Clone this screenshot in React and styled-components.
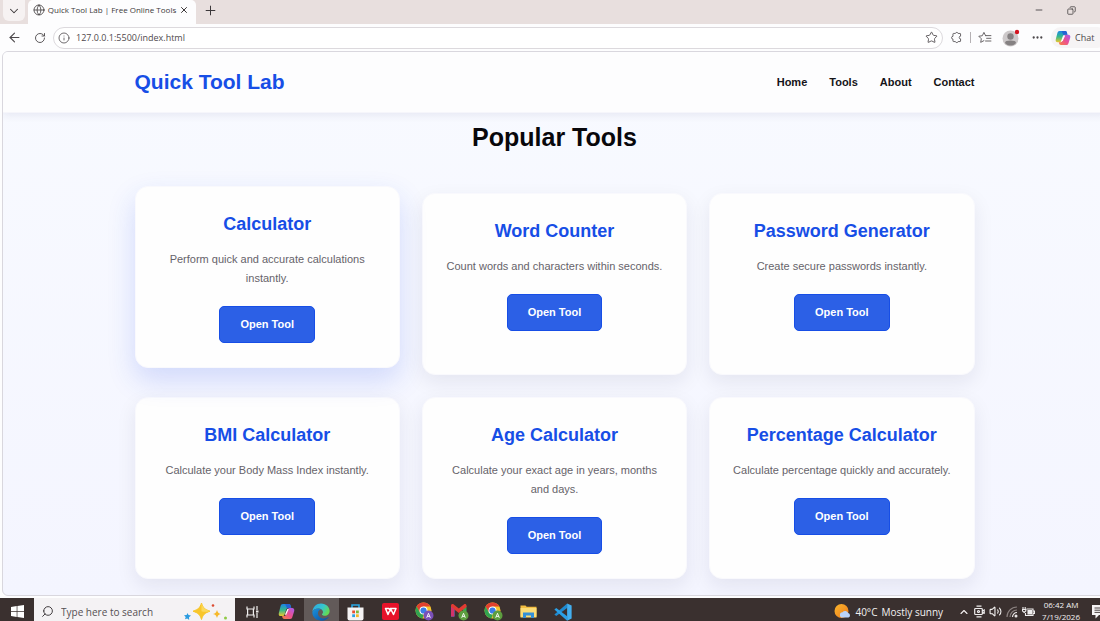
import React from 'react';
import styled, { createGlobalStyle, css } from 'styled-components';
import {
    ArrowLeft,
    ChevronDown,
    ChevronUp,
    Copy,
    Ellipsis,
    Globe,
    Info,
    Minus,
    Plus,
    RotateCw,
    Search,
    Star,
    Volume2,
    X,
} from 'lucide-react';

const NAV = ['Home', 'Tools', 'About', 'Contact'];

const TOOLS = [
    { title: 'Calculator', text: 'Perform quick and accurate calculations instantly.', raised: true },
    { title: 'Word Counter', text: 'Count words and characters within seconds.' },
    { title: 'Password Generator', text: 'Create secure passwords instantly.' },
    { title: 'BMI Calculator', text: 'Calculate your Body Mass Index instantly.' },
    { title: 'Age Calculator', text: 'Calculate your exact age in years, months and days.' },
    { title: 'Percentage Calculator', text: 'Calculate percentage quickly and accurately.' },
];

const APPS = [
    { name: 'Task view', icon: <TaskViewIcon /> },
    { name: 'Copilot', icon: <CopilotIcon size={17} id="task" /> },
    { name: 'Edge', icon: <EdgeIcon />, active: true },
    { name: 'Store', icon: <StoreIcon /> },
    { name: 'WPS Office', icon: <WpsIcon /> },
    { name: 'Chrome profile 1', icon: <ChromeIcon badge="#7a50b8" /> },
    { name: 'Gmail', icon: <GmailIcon /> },
    { name: 'Chrome profile 2', icon: <ChromeIcon badge="#5d9e3f" /> },
    { name: 'File Explorer', icon: <FolderIcon /> },
    { name: 'Visual Studio Code', icon: <CodeIcon /> },
];

function App() {
    return (
        <Screen>
            <GlobalStyle />
            <TabStrip>
                <TabSearch aria-label="Search tabs"><ChevronDown size={14} strokeWidth={1.8} /></TabSearch>
                <Tab>
                    <Globe size={12} strokeWidth={1.6} />
                    <TabTitle>Quick Tool Lab | Free Online Tools</TabTitle>
                    <IconButton aria-label="Close tab"><X size={10} strokeWidth={2.4} /></IconButton>
                </Tab>
                <NewTab aria-label="New tab"><Plus size={15} strokeWidth={1.6} /></NewTab>
                <WindowButtons>
                    <WindowButton aria-label="Minimize"><Minus size={10} strokeWidth={2} /></WindowButton>
                    <WindowButton aria-label="Restore"><Copy size={9} strokeWidth={2} transform="scale(-1 1)" /></WindowButton>
                </WindowButtons>
            </TabStrip>
            <Toolbar>
                <IconButton $width={26} aria-label="Back"><ArrowLeft size={15} strokeWidth={1.8} /></IconButton>
                <IconButton $width={25} aria-label="Reload"><RotateCw size={12} strokeWidth={1.8} /></IconButton>
                <AddressBar>
                    <Info size={12} strokeWidth={1.6} />
                    <AddressInput aria-label="Address" defaultValue="127.0.0.1:5500/index.html" />
                    <IconButton aria-label="Add to favorites"><Star size={13} strokeWidth={1.6} /></IconButton>
                </AddressBar>
                <IconButton $width={27} aria-label="Extensions"><PuzzleIcon /></IconButton>
                <Divider />
                <IconButton $width={28} aria-label="Favorites"><FavoritesIcon /></IconButton>
                <IconButton $width={24} aria-label="Profile"><AvatarIcon /></IconButton>
                <IconButton $width={28} aria-label="Settings"><Ellipsis size={13} strokeWidth={2.2} /></IconButton>
                <ChatButton>
                    <CopilotIcon size={16} id="chat" />
                    Chat
                </ChatButton>
            </Toolbar>
            <Page>
                <Header>
                    <HeaderInner>
                        <Logo>Quick Tool Lab</Logo>
                        <Nav>
                            {NAV.map((item) => (
                                <NavLink key={item} href={`#${item.toLowerCase()}`}>{item}</NavLink>
                            ))}
                        </Nav>
                    </HeaderInner>
                </Header>
                <Content>
                    <Heading>Popular Tools</Heading>
                    <Grid>
                        {TOOLS.map((tool) => (
                            <Card key={tool.title} $raised={tool.raised}>
                                <CardTitle>{tool.title}</CardTitle>
                                <CardText>{tool.text}</CardText>
                                <OpenButton>Open Tool</OpenButton>
                            </Card>
                        ))}
                    </Grid>
                </Content>
            </Page>
            <Taskbar>
                <StartButton aria-label="Start"><WindowsIcon /></StartButton>
                <SearchBox>
                    <Search size={13} strokeWidth={1.8} transform="scale(-1 1)" />
                    <SearchInput aria-label="Search" placeholder="Type here to search" />
                    <SparklesIcon />
                </SearchBox>
                <Apps>
                    {APPS.map((app) => (
                        <AppButton key={app.name} aria-label={app.name} $active={app.active}>{app.icon}</AppButton>
                    ))}
                </Apps>
                <Tray>
                    <Weather>
                        <WeatherIcon />
                        <span>40°C</span>
                        <span>Mostly sunny</span>
                    </Weather>
                    <TrayIcons>
                        <ChevronUp size={12} strokeWidth={2.2} />
                        <MeetIcon />
                        <Volume2 size={13} strokeWidth={2} />
                        <WifiIcon />
                        <BatteryIcon />
                    </TrayIcons>
                    <Clock>
                        <span>06:42 AM</span>
                        <span>7/19/2026</span>
                    </Clock>
                    <NoticeIcon />
                </Tray>
            </Taskbar>
        </Screen>
    );
}

export default App;

function PuzzleIcon() {
    return (
        <svg width="13" height="13" viewBox="0 0 24 24" fill="none" stroke="#5c585b" strokeWidth="1.7" strokeLinejoin="round">
            <path d="M7.500 4.500H10a2.600 2.600 0 0 1 5 0h3.500a1 1 0 0 1 1 1v4a2.500 2.500 0 0 0 0 5v4a1 1 0 0 1-1 1H15a2.600 2.600 0 0 1-5 0H6.500a1 1 0 0 1-1-1v-3.500a2.600 2.600 0 0 1 0-5.200V5.500a1 1 0 0 1 1-1z" />
        </svg>
    );
}

function FavoritesIcon() {
    return (
        <svg width="14" height="13" viewBox="0 0 26 24" fill="none" stroke="#5c585b" strokeWidth="1.7" strokeLinecap="round" strokeLinejoin="round">
            <path d="M14.500 8.500H14L11 2.500 8 8.700l-6.500 1 4.700 4.700L5 21l6-3.200" />
            <path d="M14 8.500h10M16 13.500h8M14 18.500h10" />
        </svg>
    );
}

function AvatarIcon() {
    return (
        <svg width="18" height="18" viewBox="0 0 18 18">
            <circle cx="8.500" cy="9.500" r="8" fill="#cdc9ca" />
            <circle cx="8.500" cy="7.500" r="3.200" fill="#858182" />
            <path d="M3 14c0-2 2-2.600 5.500-2.600S14 12 14 14c-1.500 1.800-3.500 2.600-5.500 2.600S4.500 15.800 3 14z" fill="#858182" />
            <circle cx="15" cy="3" r="2.200" fill="#d3131f" />
        </svg>
    );
}

function CopilotIcon({ size, id }) {
    return (
        <svg width={size} height={size} viewBox="0 0 24 24">
            <defs>
                <linearGradient id={`${id}-a`} x1="0" y1="0" x2="0" y2="1">
                    <stop offset="0" stopColor="#1b87e5" />
                    <stop offset="0.5" stopColor="#35b98c" />
                    <stop offset="1" stopColor="#f0c72c" />
                </linearGradient>
                <linearGradient id={`${id}-b`} x1="1" y1="0" x2="0" y2="1">
                    <stop offset="0" stopColor="#a35df2" />
                    <stop offset="0.5" stopColor="#ec4f92" />
                    <stop offset="1" stopColor="#f6833f" />
                </linearGradient>
            </defs>
            <path d="M7 1.500h8c2 0 2.500 1 3 3l.7 2.500H15c-2 0-3 1-3.600 3l-2 6c-.7 2-1.500 2.500-3 2.500H4c-2.500 0-3.500-2-2.800-4.500L3.500 5C4.200 2.500 5 1.500 7 1.500z" fill={`url(#${id}-a)`} />
            <path d="M17 22.500H9c-2 0-2.500-1-3-3l-.2-1H8c2 0 3-1 3.600-3l2-6c.7-2 1.500-2.500 3-2.500H20c2.500 0 3.500 2 2.800 4.500L20.500 19c-.8 2.500-1.500 3.500-3.500 3.500z" fill={`url(#${id}-b)`} />
            <path d="M10 1.500h5c2 0 2.500 1 3 3l.7 2.500H15c-1 0-1.600.2-2.200.8z" fill="#2464d4" />
            <path d="M13.200 8.500h2l-3.600 8h-2z" fill="#fff" />
        </svg>
    );
}

function WindowsIcon() {
    return (
        <svg width="13" height="13" viewBox="0 0 24 24" fill="#fff">
            <path d="M0 3.500 10.500 2v9.500H0zM11.800 1.800 24 0v11.500H11.800zM0 12.700h10.500V22L0 20.500zM11.800 12.700H24V24l-12.200-1.800z" />
        </svg>
    );
}

function SparklesIcon() {
    return (
        <svg width="44" height="20" viewBox="0 0 44 20">
            <path d="M17.500 1c1.600 5 3 6.200 8.500 8.200-5.500 2-6.900 3.200-8.500 8.300-1.600-5.100-3-6.300-8.500-8.300 5.500-2 6.900-3.200 8.500-8.200z" fill="#f8c62a" stroke="#f8c62a" strokeLinejoin="round" />
            <path d="M17.500 1c1.600 5 3 6.200 8.500 8.200-4 .8-6 .8-8.500 0z" fill="#fbd95c" />
            <path d="M33 8c.7 2.500 1.500 3.200 4 4-2.500.8-3.300 1.500-4 4-.7-2.500-1.500-3.200-4-4 2.500-.8 3.300-1.500 4-4z" fill="#f6b92b" />
            <path d="m3.500 11 1 2 2.500.5-2 1.700.2 2.800-2-1.500-2.200.8.7-2.300L0 13.300l2.600-.2z" fill="#2a9be0" />
            <circle cx="29" cy="3.500" r="1.300" fill="#dc4b31" />
            <circle cx="41.500" cy="16" r="1.500" fill="#8fca45" />
        </svg>
    );
}

function TaskViewIcon() {
    return (
        <svg width="13" height="14" viewBox="0 0 13 14" fill="none" stroke="#f0eeee" strokeWidth="1.200">
            <path d="M1 1.500V4h7V1.500M1 12.500V10h7v2.500M1.600 4v6M7.400 4v6M11 1v4M11 8v5" />
            <path d="M10 6.500h2.500" strokeWidth="2" />
        </svg>
    );
}

function EdgeIcon() {
    return (
        <svg width="18" height="18" viewBox="0 0 24 24">
            <defs>
                <linearGradient id="edge-top" x1="0" y1="0" x2="1" y2="0.500">
                    <stop offset="0" stopColor="#2ba6e6" />
                    <stop offset="0.600" stopColor="#35c6cf" />
                    <stop offset="1" stopColor="#62d957" />
                </linearGradient>
                <linearGradient id="edge-low" x1="0" y1="0" x2="1" y2="1">
                    <stop offset="0" stopColor="#1a93dd" />
                    <stop offset="1" stopColor="#0d4c9d" />
                </linearGradient>
            </defs>
            <path d="M.5 11.500C1 5 6 .5 12 .5c7 0 11.500 5 11.500 10.200 0 4-3 6.300-6.200 6.300-2.500 0-4-.9-4-1.700 0-.9 1.400-1.200 1.400-3.300 0-2.500-2.700-4.700-6-4.700C4.800 7.300 1.600 9 .5 11.500z" fill="url(#edge-top)" />
            <path d="M.5 12C1.400 9 4.600 7.300 8.200 7.300c1.500 0 2.800.3 3.900 1C9.500 8.800 8 11 8 13.700c0 4.200 3.600 7 7.800 7 2.200 0 4.200-.8 5.700-1.900.4-.3.900.1.600.6A11.700 11.700 0 0 1 12 23.500C5.500 23.500 0 18.500.5 12z" fill="url(#edge-low)" />
        </svg>
    );
}

function StoreIcon() {
    return (
        <svg width="17" height="18" viewBox="0 0 17 18">
            <path d="M5 5V2h7v3" fill="none" stroke="#2aa7e4" strokeWidth="1.600" />
            <path d="M.5 4.500h16v11a2 2 0 0 1-2 2h-12a2 2 0 0 1-2-2z" fill="#f5f3f4" />
            <path d="M5.200 7.500H8v2.800H5.200z" fill="#e94f32" />
            <path d="M9 7.500h2.800v2.800H9z" fill="#7cb83b" />
            <path d="M5.200 11.300H8v2.800H5.200z" fill="#2aa0e4" />
            <path d="M9 11.300h2.800v2.800H9z" fill="#f5b928" />
        </svg>
    );
}

function WpsIcon() {
    return (
        <svg width="17" height="17" viewBox="0 0 17 17">
            <rect width="17" height="17" rx="2" fill="#e7132a" />
            <path d="M8 5.500h6l-2.500 6-3-6-2.500 6-2.500-6H7l1.500 3" fill="none" stroke="#fff" strokeWidth="1.500" strokeLinejoin="round" />
        </svg>
    );
}

function Badge({ color }) {
    return (
        <>
            <circle cx="13.500" cy="13.500" r="5" fill={color} />
            <path d="m11.700 15.800 1.800-4.500 1.800 4.500M12.300 14.400h2.400" fill="none" stroke="#fff" strokeWidth="0.900" />
        </>
    );
}

function ChromeIcon({ badge }) {
    return (
        <svg width="19" height="19" viewBox="0 0 19 19">
            <circle cx="8.500" cy="8.500" r="8" fill="#f6c52d" />
            <path d="M1.570 4.500a8 8 0 0 1 13.860 0H8.500L5 10.500z" fill="#e1402f" />
            <path d="M1.570 4.500 5 10.500l3.500 2-1 4A8 8 0 0 1 1.570 4.500z" fill="#31a350" />
            <circle cx="8.500" cy="8.500" r="4" fill="#fff" />
            <circle cx="8.500" cy="8.500" r="3.100" fill="#3b7de8" />
            <Badge color={badge} />
        </svg>
    );
}

function GmailIcon() {
    return (
        <svg width="19" height="19" viewBox="0 0 19 19">
            <path d="M1 4v10.500h3.500V6z" fill="#4285f4" />
            <path d="M13 6v8.500h3.500V4z" fill="#34a853" />
            <path d="M1 5V3.500C1 2 2.600 1.500 3.800 2.400l5 4 5-4c1.200-.9 2.700-.4 2.700 1.100V5l-7.700 6z" fill="#e23b32" />
            <path d="M1 4.500v10h3.300V7.500z" fill="#d33269" />
            <Badge color="#5d9e3f" />
        </svg>
    );
}

function FolderIcon() {
    return (
        <svg width="17" height="15" viewBox="0 0 17 15">
            <path d="M.5 1.500h5l1.200 1.300h9.800v10H.5z" fill="#f2bd41" />
            <path d="M.5 4h16v9.500H.5z" fill="#fbdc77" />
            <path d="M3 8.500h11V14h-3v-2.500H6V14H3z" fill="#3490d8" />
        </svg>
    );
}

function CodeIcon() {
    return (
        <svg width="18" height="18" viewBox="0 0 24 24">
            <path d="M17.500.5v6L3 17.200l-2.500-2z" fill="#1f8ad0" />
            <path d="M17.500 23.500v-6L3 6.800l-2.500 2z" fill="#2aa0e8" />
            <path d="m17.500.5 6 2.800v17.400l-6 2.800z" fill="#43aff0" />
        </svg>
    );
}

function WeatherIcon() {
    return (
        <svg width="17" height="17" viewBox="0 0 17 17">
            <defs>
                <linearGradient id="sun" x1="0" y1="0" x2="1" y2="1">
                    <stop offset="0" stopColor="#fbb62c" />
                    <stop offset="1" stopColor="#ec7a1c" />
                </linearGradient>
            </defs>
            <circle cx="7.500" cy="8" r="7" fill="url(#sun)" />
            <path d="M8.500 14.500a2.600 2.600 0 0 1 0-5.200 3.200 3.200 0 0 1 5.700.8 2.300 2.300 0 0 1 .3 4.400z" fill="#b9d3fa" />
        </svg>
    );
}

function MeetIcon() {
    return (
        <svg width="11" height="13" viewBox="0 0 11 13" fill="none" stroke="#f0eeee" strokeWidth="1.200">
            <path d="M2.500 1.200h5M2.500 11.800h5M1.500 3.500h6a.8.8 0 0 1 .8.800v4.400a.8.8 0 0 1-.8.800h-6a.8.8 0 0 1-.8-.8V4.300a.8.8 0 0 1 .8-.8zM8.300 6l1.900-1v3.200L8.300 7.500" />
            <circle cx="4.500" cy="6.500" r="1" />
        </svg>
    );
}

function WifiIcon() {
    return (
        <svg width="12" height="12" viewBox="0 0 12 12" fill="none" stroke="#8b8281" strokeWidth="1.200">
            <path d="M1 11A10 10 0 0 1 11 1" />
            <path d="M4 11a7 7 0 0 1 7-7" />
            <path d="M6.500 11A4.500 4.500 0 0 1 11 6.500" stroke="#e8e5e5" />
            <circle cx="10" cy="10" r="1.500" fill="#e8e5e5" stroke="none" />
        </svg>
    );
}

function BatteryIcon() {
    return (
        <svg width="13" height="12" viewBox="0 0 13 12" fill="none" stroke="#f0eeee" strokeWidth="1.100">
            <path d="M4.500 3H11v6.500H3.500V7M11.500 5h1v2.500h-1M1 1v2M3.200 1v2M.5 3.500h3.300V5L2.200 6.500.5 5z" />
            <path d="M6 4.500h3.500V8H6z" fill="#f0eeee" />
        </svg>
    );
}

function NoticeIcon() {
    return (
        <svg width="16" height="15" viewBox="0 0 16 15">
            <path d="M1 1h14v10H8l-3.500 3.500V11H1z" fill="#f5f3f4" />
            <path d="M3.500 4h9M3.500 6.200h9M3.500 8.400h6" stroke="#3a302f" strokeWidth="0.900" />
        </svg>
    );
}

const GlobalStyle = createGlobalStyle`
    * {
        box-sizing: border-box;
        margin: 0;
    }
    body {
        overflow: hidden;
        background: #fdfdfe;
        font-family: 'Liberation Sans', Arial, sans-serif;
    }
    button {
        padding: 0;
        border: 0;
        background: none;
        font: inherit;
        color: inherit;
    }
    svg {
        flex-shrink: 0;
    }
`

/* the window runs a little past the right and bottom edges */
const Screen = styled.div`
    display: flex;
    flex-direction: column;
    width: calc(100vw + 7px);
    height: calc(100vh + 4px);
`

const TabStrip = styled.div`
    display: flex;
    flex-shrink: 0;
    height: 24px;
    padding-left: 3px;
    background: #e8dfde;
    color: #3c383a;
`

const IconButton = styled.button`
    display: flex;
    align-items: center;
    justify-content: center;
    flex-shrink: 0;
    ${({ $width }) => $width && css`width: ${$width}px;`}
`

const TabSearch = styled(IconButton)`
    width: 22px;
    height: 21px;
    border-radius: 0 0 6px 6px;
    background: #f6f2f2;
`

const Tab = styled.div`
    display: flex;
    align-items: center;
    justify-content: space-between;
    width: 168px;
    height: 24px;
    margin-left: 3px;
    padding: 0 7px 4px 5px;
    border-radius: 5px 5px 0 0;
    background: #fdfdfe;
`

const TabTitle = styled.span`
    font-family: 'Open Sans', sans-serif;
    font-size: 8px;
    line-height: 12px;
    white-space: nowrap;
`

const NewTab = styled(IconButton)`
    width: 28px;
    height: 20px;
`

const WindowButtons = styled.div`
    display: flex;
    margin-left: auto;
    padding-right: 20px;
`

const WindowButton = styled(IconButton)`
    width: 32px;
    height: 20px;
`

const Toolbar = styled.div`
    display: flex;
    align-items: center;
    flex-shrink: 0;
    height: 27px;
    padding-left: 1px;
    background: #fdfdfe;
    color: #4c484b;
    font-family: 'Open Sans', sans-serif;
`

const AddressBar = styled.div`
    display: flex;
    flex: 1;
    align-items: center;
    gap: 6px;
    height: 22px;
    margin-left: 1px;
    padding: 0 4px;
    border: 1px solid #dcd9dd;
    border-radius: 11px;
    background: #fff;
`

const AddressInput = styled.input`
    flex: 1;
    min-width: 0;
    padding: 0;
    border: 0;
    outline: 0;
    background: transparent;
    color: #4f4a4d;
    font-family: 'Open Sans', sans-serif;
    font-size: 9px;
    line-height: 14px;
`

const Divider = styled.span`
    width: 1px;
    height: 11px;
    background: #b5b1b4;
`

const ChatButton = styled.button`
    display: flex;
    align-items: center;
    gap: 4px;
    width: 56px;
    height: 21px;
    padding-left: 4px;
    border-radius: 10px;
    background: #f6f4f5;
    font-size: 9px;
`

const Page = styled.main`
    flex: 1;
    min-height: 0;
    margin: 0 0 2px 2px;
    overflow: hidden;
    border: 1px solid #d9d7de;
    border-radius: 6px;
    background: linear-gradient(180deg, #f8faff 0%, #f4f5ff 100%);
`

const Header = styled.header`
    position: relative;
    padding: 0 20px;
    border-bottom: 1px solid #f6f6fb;
    background: #fdfdfe;
    box-shadow: 0 2px 8px rgba(40, 40, 110, 0.09);
`

const HeaderInner = styled.div`
    display: flex;
    align-items: center;
    justify-content: space-between;
    max-width: 840px;
    height: 60px;
    margin: 0 auto;
`

const Logo = styled.h1`
    color: #174ee6;
    font-size: 21px;
    line-height: 28px;
`

const Nav = styled.nav`
    display: flex;
    gap: 22px;
`

const NavLink = styled.a`
    color: #151418;
    font-size: 11px;
    font-weight: 700;
    line-height: 18px;
    text-decoration: none;
`

const Content = styled.section`
    max-width: 840px;
    margin: 0 auto;
    padding-top: 8px;
`

const Heading = styled.h2`
    margin-bottom: 40px;
    color: #08070b;
    font-size: 25px;
    line-height: 32px;
    text-align: center;
`

const Grid = styled.div`
    display: grid;
    grid-template-columns: repeat(3, 1fr);
    gap: 22px;
`

const Card = styled.article`
    padding: 24px 20px;
    border: 1px solid #f9f9fd;
    border-radius: 13px;
    background: #fefefe;
    box-shadow: 0 7px 20px rgba(30, 30, 70, 0.08);
    text-align: center;
    ${({ $raised }) => $raised && css`
        transform: translateY(-7px);
        box-shadow: 0 12px 28px rgba(37, 80, 235, 0.18);
    `}
`

const CardTitle = styled.h3`
    margin-bottom: 12px;
    color: #174ee6;
    font-size: 18px;
    line-height: 27px;
`

const CardText = styled.p`
    margin-bottom: 18px;
    color: #66636a;
    font-size: 11px;
    line-height: 19px;
`

const OpenButton = styled.button`
    height: 37px;
    padding: 0 20px 2px;
    border: 1px solid #174ee6;
    border-radius: 5px;
    background: #2c60e6;
    color: #fff;
    font-size: 11px;
    font-weight: 700;
`

const Taskbar = styled.footer`
    display: flex;
    flex-shrink: 0;
    height: 27px;
    background: #3a302f;
    color: #f3f1f1;
    font-family: 'Open Sans', sans-serif;
`

const StartButton = styled(IconButton)`
    width: 34px;
`

const SearchBox = styled.div`
    display: flex;
    align-items: center;
    gap: 7px;
    width: 201px;
    padding: 0 7px;
    background: #f4f2f4;
    color: #3f3b3d;
`

const SearchInput = styled.input`
    flex: 1;
    min-width: 0;
    padding: 0;
    border: 0;
    outline: 0;
    background: transparent;
    font-family: 'Open Sans', sans-serif;
    font-size: 10px;
    line-height: 14px;
    &::placeholder {
        color: #555053;
        opacity: 1;
    }
`

const Apps = styled.div`
    display: flex;
    width: 345px;
`

const AppButton = styled(IconButton)`
    flex: 1;
    background: ${({ $active }) => $active ? '#625a59' : 'none'};
`

const Tray = styled.div`
    display: flex;
    align-items: center;
    gap: 7px;
    margin-left: auto;
    white-space: nowrap;
`

const Weather = styled.div`
    display: flex;
    align-items: center;
    gap: 4px;
    margin-right: 8px;
    font-size: 10px;
    line-height: 14px;
`

const TrayIcons = styled.div`
    display: flex;
    align-items: center;
    gap: 4px;
`

const Clock = styled.div`
    display: flex;
    flex-direction: column;
    align-items: center;
    margin-right: 4px;
    padding-bottom: 2px;
    font-size: 8px;
    line-height: 12px;
`
